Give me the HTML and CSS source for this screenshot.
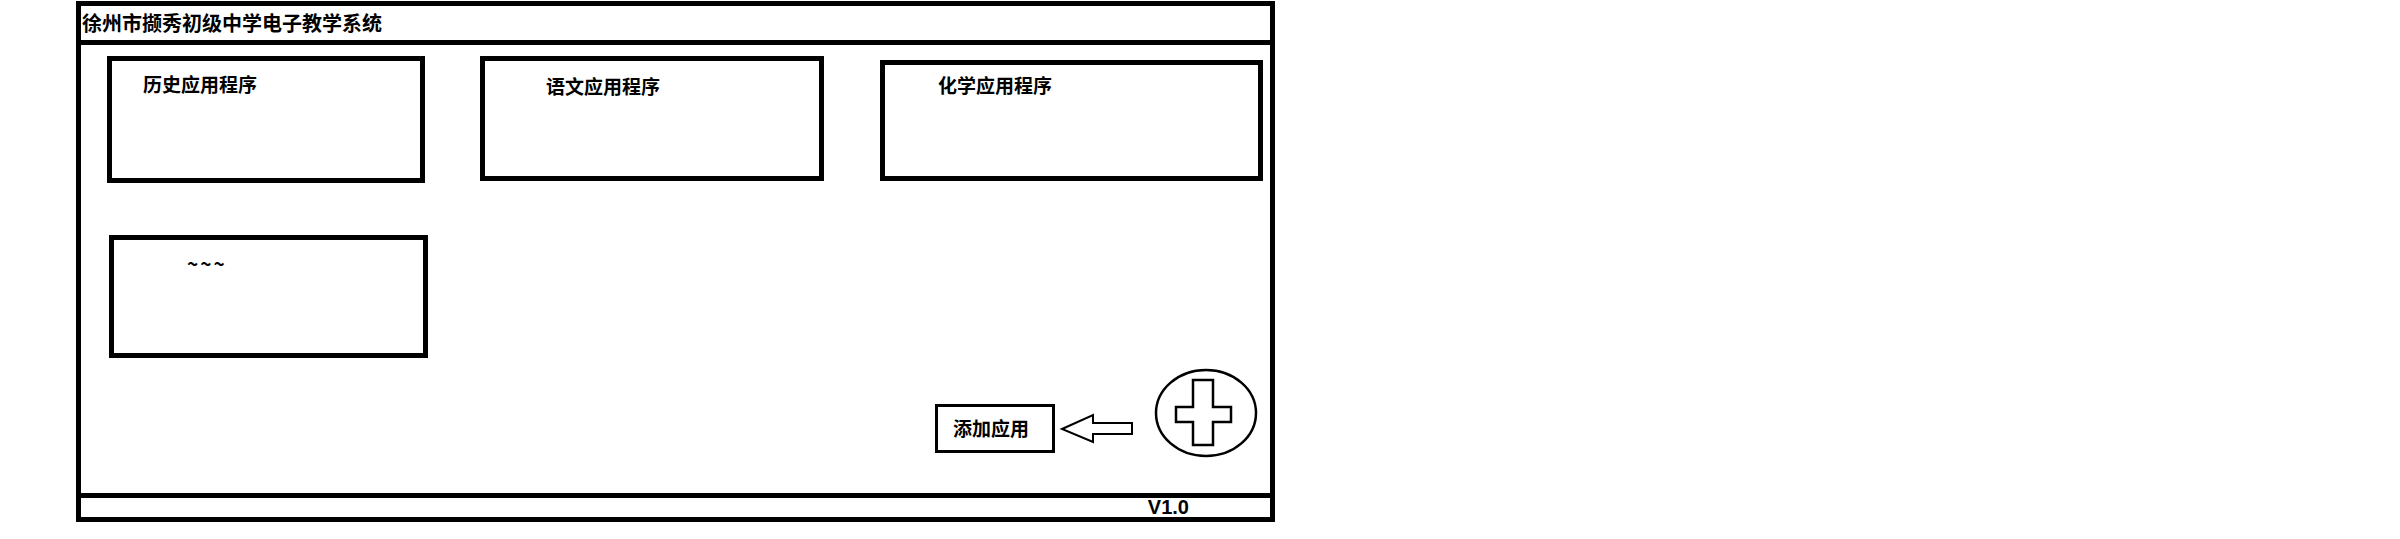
FILE: index.html
```html
<!DOCTYPE html>
<html lang="zh-CN">
<head>
  <meta charset="UTF-8">
  <title>徐州市撷秀初级中学电子教学系统</title>
  <link rel="stylesheet" href="styles.css">
</head>
<body>
  <div class="window">
    <div class="title-bar">徐州市撷秀初级中学电子教学系统</div>

    <div class="main">
      <div class="app-row">
        <div class="app-card history">历史应用程序</div>
        <div class="app-card chinese">语文应用程序</div>
        <div class="app-card chemistry">化学应用程序</div>
      </div>
      <div class="app-row second">
        <div class="app-card more">~~~</div>
      </div>

      <div class="add-row">
        <div class="add-label">添加应用</div>
        <svg class="add-arrow" width="76" height="32" viewBox="0 0 76 32">
          <polygon points="4,16 35,2 35,10 74,10 74,21 35,21 35,29" fill="none" stroke="#000" stroke-width="2" />
        </svg>
        <svg class="add-button" width="109" height="94" viewBox="0 0 109 94">
          <ellipse cx="55" cy="47" rx="50" ry="43" fill="none" stroke="#000" stroke-width="2.5" />
          <polygon points="42,14 62,14 62,41 80,41 80,56 62,56 62,79 42,79 42,56 25,56 25,41 42,41" fill="none" stroke="#000" stroke-width="2.5" />
        </svg>
      </div>
    </div>

    <div class="status-bar">V1.0</div>
  </div>
</body>
</html>
```

FILE: styles.css
```css
body {
  margin: 0;
  padding: 1px 0 0 76px;
  background: #fff;
  color: #000;
  font-family: "Noto Sans CJK SC", "Noto Sans", sans-serif;
  font-weight: bold;
}
.window {
  box-sizing: border-box;
  width: 1199px;
  height: 521px;
  border: 5px solid #000;
  display: flex;
  flex-direction: column;
}
.title-bar {
  height: 34px;
  line-height: 34px;
  font-size: 20px;
  padding-left: 1px;
  border-bottom: 5px solid #000;
}
.main {
  flex: 1;
  display: flex;
  flex-direction: column;
}
.app-row {
  display: flex;
  align-items: flex-start;
  padding-top: 11px;
}
.app-row.second {
  padding-top: 52px;
}
.app-card {
  box-sizing: border-box;
  border: 5px solid #000;
  font-size: 19px;
  line-height: 20px;
}
.history {
  width: 318px;
  height: 127px;
  margin-left: 26px;
  padding: 13px 0 0 31px;
}
.chinese {
  width: 344px;
  height: 125px;
  margin-left: 55px;
  padding: 15px 0 0 61px;
}
.chemistry {
  width: 383px;
  height: 121px;
  margin-left: 56px;
  margin-top: 4px;
  padding: 10px 0 0 53px;
}
.more {
  width: 319px;
  height: 123px;
  margin-left: 28px;
  padding: 13px 0 0 73px;
  letter-spacing: 2px;
}
.add-row {
  margin-top: auto;
  margin-bottom: 33px;
  display: flex;
  align-items: flex-start;
  justify-content: flex-end;
  padding-right: 10px;
}
.add-label {
  box-sizing: border-box;
  width: 120px;
  height: 49px;
  margin-top: 38px;
  border: 3px solid #000;
  font-size: 19px;
  line-height: 20px;
  padding: 11px 0 0 15px;
}
.add-arrow {
  margin: 47px 0 0 3px;
}
.add-button {
  margin-left: 17px;
}
.status-bar {
  height: 19px;
  line-height: 19px;
  border-top: 5px solid #000;
  font-family: "Liberation Sans", Arial, sans-serif;
  font-size: 20px;
  text-align: right;
  padding-right: 81px;
}
```
